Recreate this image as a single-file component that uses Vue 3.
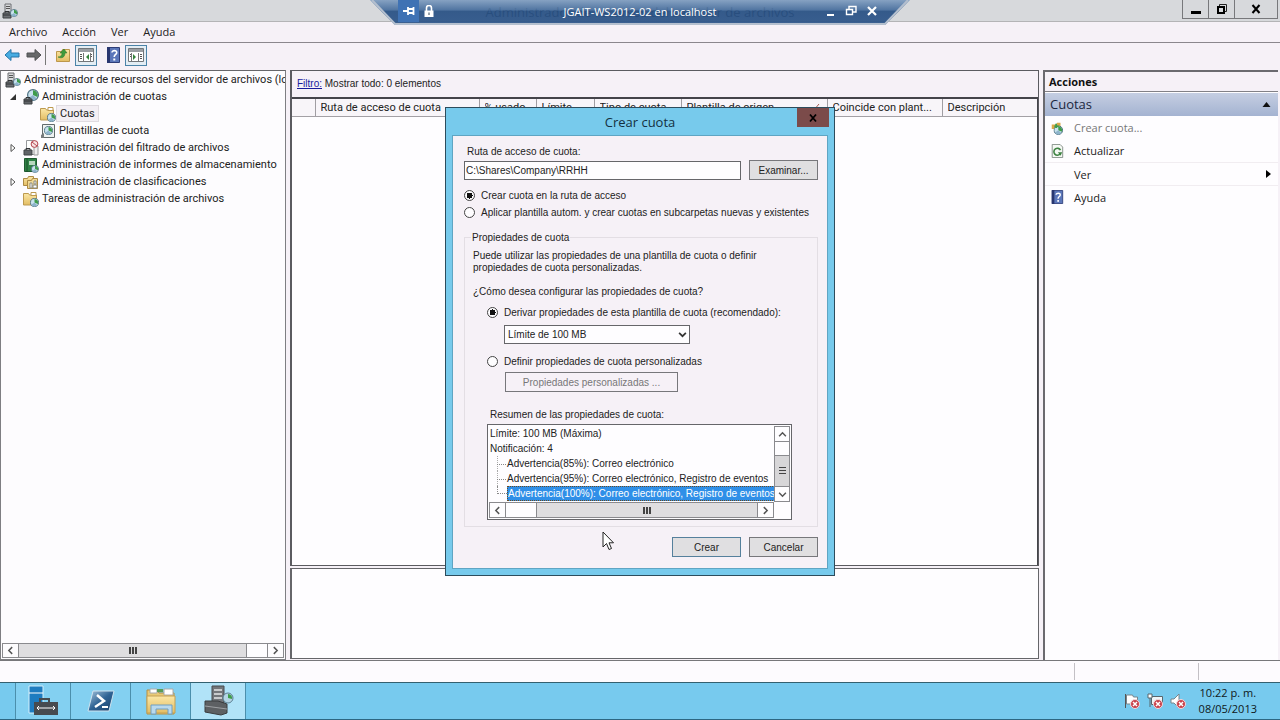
<script setup>
import { ref } from 'vue'

const path = ref('C:\\Shares\\Company\\RRHH')
const scope = ref('path')
const mode = ref('template')
const template = ref('Límite de 100 MB')

const menus = ['Archivo', 'Acción', 'Ver', 'Ayuda']
const tree = [
  { text: 'Administrador de recursos del servidor de archivos (local)', level: 0, icon: 'server' },
  { text: 'Administración de cuotas', level: 1, icon: 'quota', arrow: 'open' },
  { text: 'Cuotas', level: 2, icon: 'folder', selected: true },
  { text: 'Plantillas de cuota', level: 2, icon: 'template' },
  { text: 'Administración del filtrado de archivos', level: 1, icon: 'screen', arrow: 'closed' },
  { text: 'Administración de informes de almacenamiento', level: 1, icon: 'report' },
  { text: 'Administración de clasificaciones', level: 1, icon: 'classify', arrow: 'closed' },
  { text: 'Tareas de administración de archivos', level: 1, icon: 'folder' },
]
const columns = [
  { text: '', cls: 'c-icon' },
  { text: 'Ruta de acceso de cuota', cls: 'c-path' },
  { text: '% usado', cls: 'c-used' },
  { text: 'Límite', cls: 'c-limit' },
  { text: 'Tipo de cuota', cls: 'c-type' },
  { text: 'Plantilla de origen', cls: 'c-source', sorted: true },
  { text: 'Coincide con plant...', cls: 'c-match' },
  { text: 'Descripción', cls: 'c-desc' },
]
const summary = [
  { text: 'Límite: 100 MB (Máxima)' },
  { text: 'Notificación: 4' },
  { text: 'Advertencia(85%): Correo electrónico', child: true },
  { text: 'Advertencia(95%): Correo electrónico, Registro de eventos', child: true },
  { text: 'Advertencia(100%): Correo electrónico, Registro de eventos', child: true, selected: true },
]
</script>

<template>
  <div class="desktop">
    <svg class="defs" aria-hidden="true">
      <defs>
        <linearGradient id="gFolder" x1="0" y1="0" x2="0" y2="1">
          <stop offset="0" stop-color="#fbe7a6" /><stop offset="1" stop-color="#e3bd63" />
        </linearGradient>
        <linearGradient id="gBlue" x1="0" y1="0" x2="1" y2="1">
          <stop offset="0" stop-color="#a9c6dd" /><stop offset="0.5" stop-color="#2f6394" /><stop offset="1" stop-color="#1c3f68" />
        </linearGradient>
        <linearGradient id="gBar" x1="0" y1="0" x2="0" y2="1">
          <stop offset="0" stop-color="#7f9dc0" /><stop offset="0.4" stop-color="#456c9c" /><stop offset="0.45" stop-color="#264f83" /><stop offset="1" stop-color="#2c5489" />
        </linearGradient>
        <symbol id="pie" viewBox="0 0 10 10">
          <circle cx="5" cy="5" r="4.5" fill="#c9e2ee" stroke="#4c6f80" />
          <path d="M5 5V1a4 4 0 0 1 3.6 5.6z" fill="#3f9c4b" />
          <path d="M5 5L1.5 7.5A4 4 0 0 0 8 8z" fill="#8db3cb" />
        </symbol>
        <symbol id="i-server" viewBox="0 0 16 16">
          <path d="M3 1h6v8H3z" fill="#d6d8da" stroke="#6c6f72" />
          <path d="M4 3.5h4M4 5.5h4" stroke="#555" />
          <path d="M1 10h8v5H1z" fill="#6d7074" stroke="#3f4245" /><path d="M3 10V8.500h4V10M1 12h8" fill="none" stroke="#303335" />
          <use href="#pie" x="8" y="6" width="8" height="8" />
        </symbol>
        <symbol id="i-quota" viewBox="0 0 16 16">
          <use href="#pie" x="4" y="0" width="12" height="12" />
          <path d="M1 10h8v5H1z" fill="#606468" stroke="#3f4245" /><path d="M3 10V8.500h4V10M1 12h8" fill="none" stroke="#303335" />
        </symbol>
        <symbol id="i-folder" viewBox="0 0 16 16">
          <path d="M.5 2.500h5l1 1.500h7v10H.5z" fill="url(#gFolder)" stroke="#bd9a50" />
          <path d="M8 1.500h5v3H8z" fill="#fff" stroke="#bd9a50" />
          <use href="#pie" x="7" y="7" width="9" height="9" />
        </symbol>
        <symbol id="i-template" viewBox="0 0 16 16">
          <path d="M2.500 1.500h12v13h-12z" fill="#eef2f1" stroke="#626b6c" />
          <use href="#pie" x="4" y="3" width="9" height="9" /><path d="M1 12l3-2v5H1z" fill="#767b7d" />
        </symbol>
        <symbol id="i-screen" viewBox="0 0 16 16">
          <path d="M3.500.5h8v14h-8z" fill="#fff" stroke="#97999c" /><path d="M11 6h4v9h-4z" fill="#f0f0f0" stroke="#999" />
          <path d="M1 10h8v5H1z" fill="#606468" stroke="#3f4245" /><path d="M3 10V8.500h4V10" fill="none" stroke="#303335" />
          <circle cx="11.500" cy="4" r="3.400" fill="#f7e4e4" stroke="#b54750" /><path d="M9 2l5 4" stroke="#b54750" />
        </symbol>
        <symbol id="i-report" viewBox="0 0 16 16">
          <path d="M1.500 1.500h12v13h-12z" fill="#2f8145" stroke="#1f5a30" /><path d="M4 1v14" stroke="#1b4f2b" />
          <path d="M6 4h6v4H6z" fill="#b8d8bf" /><use href="#pie" x="8" y="8" width="8" height="8" />
        </symbol>
        <symbol id="i-classify" viewBox="0 0 16 16">
          <path d="M.5 4.500h4l1-2h5v9h-10z" fill="url(#gFolder)" stroke="#ad8b45" />
          <path d="M4.500 6.500h4l1-2h5v10h-10z" fill="#f0d894" stroke="#ad8b45" />
          <path d="M7 9h2v5H7zM10 11h4v3h-4zM11 7h2v3h-2z" fill="#fff" stroke="#8b8b82" />
        </symbol>
        <symbol id="i-help" viewBox="0 0 16 16">
          <path d="M2.500.5h12v15h-12z" fill="#5b76b9" stroke="#2e3d78" /><path d="M2 0h3v16H2z" fill="#28366f" />
          <path d="M7 5.500C7 3 12 3 11.700 5.700c0 1.800-2.500 1.800-2.500 4.300" fill="none" stroke="#fff" stroke-width="1.600" /><path d="M8.300 11.500h2v2h-2z" fill="#fff" />
        </symbol>
        <symbol id="badge" viewBox="0 0 10 10">
          <circle cx="5" cy="5" r="4.500" fill="#c8404a" stroke="#f2dadd" /><path d="M3 3l4 4M7 3L3 7" stroke="#fff" stroke-width="1.500" />
        </symbol>
      </defs>
    </svg>

    <header class="titlebar">
      <svg class="app-icon" viewBox="0 0 16 16"><use href="#i-server" /></svg>
      <h1>Administrador de recursos del servidor de archivos</h1>
      <div class="win-buttons">
        <button aria-label="Minimizar"><svg viewBox="0 0 12 12"><path d="M1 9.500h10" stroke="#000" stroke-width="3" /></svg></button>
        <button aria-label="Restaurar"><svg viewBox="0 0 12 12"><path d="M3.500 3V1.500h7v7H9" fill="none" stroke="#222" /><path d="M2 4h6v6H2z" fill="none" stroke="#000" stroke-width="2" /></svg></button>
        <button class="w-close" aria-label="Cerrar"><svg viewBox="0 0 12 12"><path d="M2.500 2l7 8M9.500 2l-7 8" stroke="#000" stroke-width="2" /></svg></button>
      </div>
    </header>

    <nav class="menubar">
      <button v-for="m in menus" :key="m">{{ m }}</button>
    </nav>

    <div class="toolbar">
      <button aria-label="Atrás"><svg viewBox="0 0 16 16"><path d="M1 8l6-5.500V6h8v4H7v3.500z" fill="#48ace2" stroke="#2575a8" /></svg></button>
      <button aria-label="Adelante"><svg viewBox="0 0 16 16"><path d="M15 8L9 2.500V6H1v4h8v3.500z" fill="#67686a" stroke="#4f5052" /></svg></button>
      <span class="sep"></span>
      <button aria-label="Subir"><svg viewBox="0 0 16 16"><path d="M1.500 4.500h5l1-2h7v12h-13z" fill="url(#gFolder)" stroke="#bd974b" /><path d="M3 10c3 0 4-2 4-4H5l4-4 3 4h-2c0 4-3 6-7 4z" fill="#3f9b3b" stroke="#24702b" stroke-width=".5" /></svg></button>
      <button class="boxed" aria-label="Mostrar árbol"><svg viewBox="0 0 16 16"><path d="M.5 1.500h15v13H.5z" fill="#fff" stroke="#72767a" /><path d="M1 2h14v3H1z" fill="#9a9ea3" /><path d="M5.500 6v8M12.500 6v8" stroke="#777" /><path d="M2 7.500h2M2 9.500h2M2 11.500h2M13 7.500h1M13 9.500h1" stroke="#555" /><path d="M11 7v6l-3-3z" fill="#35833c" /></svg></button>
      <button class="t-help" aria-label="Ayuda"><svg viewBox="0 0 16 16"><use href="#i-help" /></svg></button>
      <button class="boxed" aria-label="Mostrar acciones"><svg viewBox="0 0 16 16"><path d="M.5 1.500h15v13H.5z" fill="#fff" stroke="#72767a" /><path d="M1 2h14v3H1z" fill="#9a9ea3" /><path d="M10.500 6v8M3.500 6v8" stroke="#777" /><path d="M12 7.500h2M12 9.500h2M12 11.500h2M2 7.500h1M2 9.500h1" stroke="#555" /><path d="M5 7v6l3-3z" fill="#35833c" /></svg></button>
    </div>

    <main class="workspace">
      <aside class="tree-pane">
        <ul class="tree">
          <li v-for="n in tree" :key="n.text" :class="['level' + n.level, { selected: n.selected }]">
            <svg v-if="n.level === 1" class="arrow" viewBox="0 0 8 8">
              <path v-if="n.arrow === 'open'" d="M7 1v6H1z" fill="#333" />
              <path v-if="n.arrow === 'closed'" d="M2 .5v7L6 4z" fill="#fff" stroke="#555" />
            </svg>
            <svg class="node-icon" viewBox="0 0 16 16"><use :href="'#i-' + n.icon" /></svg>
            <span>{{ n.text }}</span>
          </li>
        </ul>
        <div class="hscroll">
          <button aria-label="Izquierda"><svg viewBox="0 0 8 8"><path d="M5.500 1L2.500 4l3 3" fill="none" stroke="#555" stroke-width="1.300" /></svg></button>
          <div class="track"><div class="thumb tree-thumb"><i></i></div></div>
          <button aria-label="Derecha"><svg viewBox="0 0 8 8"><path d="M2.500 1l3 3-3 3" fill="none" stroke="#555" stroke-width="1.300" /></svg></button>
        </div>
      </aside>

      <section class="center">
        <div class="list-pane">
          <p class="filter"><a href="#">Filtro:</a> Mostrar todo: 0 elementos</p>
          <div class="grid">
            <table>
              <thead>
                <tr>
                  <th v-for="c in columns" :key="c.cls" :class="c.cls">
                    <div>{{ c.text }}<svg v-if="c.sorted" class="sort" viewBox="0 0 8 8"><path d="M1 7l5-6" stroke="#a65a50" /></svg></div>
                  </th>
                </tr>
              </thead>
            </table>
          </div>
        </div>
        <div class="detail-pane"></div>
      </section>

      <aside class="actions">
        <h2>Acciones</h2>
        <h3>Cuotas <svg viewBox="0 0 8 5"><path d="M0 5l4-5 4 5z" fill="#111" /></svg></h3>
        <ul>
          <li><button disabled><svg viewBox="0 0 16 16"><path d="M2 4h5l1-2h4v7H2z" fill="#d9a94a" /><use href="#pie" x="4" y="5" width="11" height="11" /><path d="M7 3v5M5 6h5" stroke="#3f9c4b" stroke-width="2" /></svg>Crear cuota...</button></li>
          <li><button><svg viewBox="0 0 16 16"><path d="M2.500.5h9l3 3v12h-12z" fill="#f5f8f4" stroke="#7d8880" /><path d="M11.500 11.500A4 4 0 1 1 12 7" fill="none" stroke="#3c8241" stroke-width="1.800" /><path d="M9 9.500h5l-2 4z" fill="#3c8241" /></svg>Actualizar</button></li>
          <li class="ruled"><button><span class="no-icon"></span>Ver<svg class="sub" viewBox="0 0 5 8"><path d="M0 0l5 4-5 4z" fill="#000" /></svg></button></li>
          <li class="ruled"><button><svg viewBox="0 0 16 16"><use href="#i-help" /></svg>Ayuda</button></li>
        </ul>
      </aside>
    </main>

    <div class="statusbar"><span></span><span></span></div>

    <footer class="taskbar">
      <div class="apps">
        <button aria-label="Administrador del servidor"><svg viewBox="0 0 32 32"><path d="M2 1h14v27H2z" fill="#1e7cc0" stroke="#d4effb" /><path d="M2 8h14" stroke="#fff" /><path d="M13 17v-3h9v3" fill="none" stroke="#474b50" stroke-width="2" /><path d="M7 17h24v13H7z" fill="#474b50" /><path d="M10 23h18M12 21l-2 2 2 2M26 21l2 2-2 2" fill="none" stroke="#fff" /></svg></button>
        <button aria-label="PowerShell"><svg viewBox="0 0 32 32"><path d="M8 6h21l-5 20H3z" fill="url(#gBlue)" stroke="#cfe3ef" /><path d="M12 10l7 6-9 6" fill="none" stroke="#fff" stroke-width="2.500" /><path d="M17 22h6" stroke="#fff" stroke-width="2" /></svg></button>
        <button aria-label="Explorador"><svg viewBox="0 0 32 32"><path d="M2 5h10l2 3h15v21H2z" fill="#e8c977" stroke="#b48f43" /><path d="M5 4h7v4H5zM19 4h9v6h-9z" fill="#fff" stroke="#aaa" /><path d="M12 4h6v3h-6z" fill="#5b9c57" /><path d="M2 11h28v17H2z" fill="url(#gFolder)" stroke="#c4a055" /><path d="M6 29v-9h21v9h-4v-5H11v5z" fill="#b9d9ed" stroke="#6f9fc3" /></svg></button>
        <button class="active" aria-label="Recursos de archivos"><svg viewBox="0 0 32 32"><path d="M10 1h12v17H10z" fill="#73767a" stroke="#484b4e" /><path d="M12 5h8M12 9h8M12 13h8" stroke="#c8cacc" stroke-width="2" /><path d="M3 16h13l9 3v9l-6 2L3 27z" fill="#5d6063" stroke="#3a3c3e" /><path d="M3 21l22 3" stroke="#9da0a3" /><circle cx="26" cy="13" r="5" fill="#b4d5e5" stroke="#5a7e91" /><path d="M26 13V9a4 4 0 0 1 4 5z" fill="#3f9c4b" /></svg></button>
      </div>
      <div class="tray">
        <svg viewBox="0 0 16 16"><path d="M1.500 1v14" stroke="#555" /><path d="M2.500 2h6l1 2h4v7h-11z" fill="#fff" stroke="#77858c" /><use href="#badge" x="6" y="6" width="10" height="10" /></svg>
        <svg viewBox="0 0 16 16"><path d="M4.500 3.500h11v8h-11z" fill="#eef5f8" stroke="#59666d" /><path d="M1 1h4v4H1zM3 5v9" fill="#fff" stroke="#59666d" /><use href="#badge" x="6" y="6" width="10" height="10" /></svg>
        <svg viewBox="0 0 16 16"><path d="M1 6h3l5-5v14l-5-5H1z" fill="#fff" stroke="#77858c" /><use href="#badge" x="6" y="6" width="10" height="10" /></svg>
      </div>
      <time class="clock"><span>10:22 p. m.</span><span>08/05/2013</span></time>
    </footer>

    <div class="rdp">
      <svg class="rdp-shape" viewBox="0 0 540 25" preserveAspectRatio="none"><path d="M0 0h540l-25 25H25z" fill="url(#gBar)" fill-opacity=".92" /><path d="M2 0l23 24h490l23-24" fill="none" stroke="#b4bfce" stroke-width="2" /></svg>
      <div class="rdp-left">
        <button class="pin" aria-label="Anclar"><svg viewBox="0 0 12 12"><path d="M0 6h5M5 2v8M5 4h5M5 8h5M10.500 2v8" stroke="#fff" stroke-width="1.800" /></svg></button>
        <svg class="lock" viewBox="0 0 12 12"><path d="M3.500 6V3a2.500 2.500 0 0 1 5 0v3" fill="none" stroke="#fff" stroke-width="1.600" /><path d="M1.500 5.500h9V12h-9z" fill="#fff" /><path d="M6 7.500v2.500" stroke="#345" /></svg>
      </div>
      <span class="rdp-title">JGAIT-WS2012-02 en localhost</span>
      <div class="rdp-right">
        <button aria-label="Minimizar sesión"><svg viewBox="0 0 12 12"><path d="M3 10h7" stroke="#fff" stroke-width="2" /></svg></button>
        <button aria-label="Restaurar sesión"><svg viewBox="0 0 12 12"><path d="M4 4V1.500h7V7H8M1.500 4.500h6v5h-6z" fill="none" stroke="#fff" stroke-width="1.400" /></svg></button>
        <button aria-label="Cerrar sesión"><svg viewBox="0 0 12 12"><path d="M2 2l8 8M10 2l-8 8" stroke="#fff" stroke-width="2.200" /></svg></button>
      </div>
    </div>

    <form class="dialog" role="dialog" aria-labelledby="dlg-title" @submit.prevent>
      <div class="dlg-head">
        <h2 id="dlg-title">Crear cuota</h2>
        <button type="button" class="dlg-close" aria-label="Cerrar diálogo"><svg viewBox="0 0 10 10"><path d="M2 1.500l6 7M8 1.500l-6 7" stroke="#000" stroke-width="1.800" /></svg></button>
      </div>
      <div class="dlg-body">
        <label class="path-label" for="path">Ruta de acceso de cuota:</label>
        <div class="path-row">
          <input id="path" v-model="path" type="text" />
          <button type="button" class="btn">Examinar...</button>
        </div>
        <label class="radio"><input v-model="scope" type="radio" name="scope" value="path" />Crear cuota en la ruta de acceso</label>
        <label class="radio"><input v-model="scope" type="radio" name="scope" value="auto" />Aplicar plantilla autom. y crear cuotas en subcarpetas nuevas y existentes</label>

        <fieldset>
          <legend>Propiedades de cuota</legend>
          <p class="intro">Puede utilizar las propiedades de una plantilla de cuota o definir<br />propiedades de cuota personalizadas.</p>
          <p class="question">¿Cómo desea configurar las propiedades de cuota?</p>
          <div class="indent">
            <label class="radio"><input v-model="mode" type="radio" name="mode" value="template" />Derivar propiedades de esta plantilla de cuota (recomendado):</label>
            <div class="select-wrap">
              <select v-model="template" aria-label="Plantilla de cuota"><option>Límite de 100 MB</option></select>
              <svg viewBox="0 0 8 8"><path d="M1 2.500L4 5.500 7 2.500" fill="none" stroke="#333" stroke-width="1.500" /></svg>
            </div>
            <label class="radio"><input v-model="mode" type="radio" name="mode" value="custom" />Definir propiedades de cuota personalizadas</label>
            <button type="button" class="btn custom" disabled>Propiedades personalizadas ...</button>
            <p class="summary-label">Resumen de las propiedades de cuota:</p>
            <div class="summary">
              <div class="summary-top">
                <ul>
                  <li v-for="s in summary" :key="s.text" :class="{ child: s.child, selected: s.selected }"><span>{{ s.text }}</span></li>
                </ul>
                <div class="vscroll">
                  <button type="button" aria-label="Arriba"><svg viewBox="0 0 8 8"><path d="M1 5.500l3-3 3 3" fill="none" stroke="#555" stroke-width="1.300" /></svg></button>
                  <div class="vtrack"><div class="vthumb"><i></i></div></div>
                  <button type="button" aria-label="Abajo"><svg viewBox="0 0 8 8"><path d="M1 2.500l3 3 3-3" fill="none" stroke="#555" stroke-width="1.300" /></svg></button>
                </div>
              </div>
              <div class="hscroll">
                <button type="button" aria-label="Desplazar a la izquierda"><svg viewBox="0 0 8 8"><path d="M5.500 1L2.500 4l3 3" fill="none" stroke="#555" stroke-width="1.300" /></svg></button>
                <div class="track right"><div class="thumb sum-thumb"><i></i></div></div>
                <button type="button" aria-label="Desplazar a la derecha"><svg viewBox="0 0 8 8"><path d="M2.500 1l3 3-3 3" fill="none" stroke="#555" stroke-width="1.300" /></svg></button>
              </div>
            </div>
          </div>
        </fieldset>

        <div class="dlg-actions">
          <button type="submit" class="btn primary">Crear</button>
          <button type="button" class="btn">Cancelar</button>
        </div>
      </div>
    </form>

    <svg class="cursor" viewBox="0 0 12 20"><path d="M1 1v15l3.500-3.500L7 18.500l2.500-1L7 11.800h4.500z" fill="#fff" stroke="#222" /></svg>
  </div>
</template>

<style>
body { margin: 0; }
</style>

<style scoped>
* { box-sizing: border-box; }
h1, h2, h3, p, ul { margin: 0; padding: 0; font-weight: 400; }
ul { list-style: none; }
button { font: inherit; color: inherit; padding: 0; margin: 0; border: 0; background: none; border-radius: 0; }
svg { display: block; flex: none; }
.defs { position: absolute; width: 0; height: 0; }

.desktop {
  position: relative; display: flex; flex-direction: column; min-height: 100vh; overflow: hidden;
  background: #f6f1f7; color: #222; font: 11px/17px "Open Sans", "Noto Sans", sans-serif;
}

.titlebar { display: grid; grid-template-columns: 1fr auto 1fr; height: 22px; background: #d7d9dc; border-bottom: 1px solid #b4b4b6; }
.app-icon { width: 16px; height: 16px; margin: 3px 0 0 2px; }
.titlebar h1 { font-size: 13px; line-height: 24px; color: #333; }
.win-buttons { display: flex; justify-self: end; height: 19px; margin-right: 2px; border: 1px solid #77787b; border-top: 0; }
.win-buttons button { display: grid; place-items: center; width: 26px; border-right: 1px solid #77787b; }
.win-buttons .w-close { width: 42px; border: 0; }
.win-buttons svg { width: 12px; height: 12px; }

.menubar { display: flex; gap: 15px; height: 21px; padding-left: 9px; border-bottom: 1px solid #8b878d; }
.menubar button { line-height: 20px; }

.toolbar { display: flex; align-items: center; height: 27px; padding: 0 0 3px 4px; }
.toolbar svg { width: 16px; height: 16px; }
.toolbar > button + button { margin-left: 6px; }
.sep { width: 1px; height: 20px; margin: 0 9px 0 3px; background: #777; }
.toolbar .boxed { display: grid; place-items: center; width: 22px; height: 21px; margin-left: 4px; border: 1px solid #4b83a8; background: #e3edf4; }
.toolbar .t-help { margin-left: 8px; }

.workspace { display: flex; flex: 1; gap: 4px; border-bottom: 1px solid #77777a; }
.tree-pane { display: flex; flex-direction: column; width: 286px; border: 1px solid #7e7e82; border-top-color: #66666a; background: #fdfcfe; overflow: hidden; }
.tree { flex: 1; font-family: Roboto, "Open Sans", sans-serif; }
.tree li { display: flex; align-items: center; height: 17px; white-space: nowrap; }
.tree .node-icon { width: 16px; height: 16px; margin-right: 3px; }
.tree .level0 { padding-left: 4px; }
.tree .level1 { padding-left: 8px; }
.tree .level2 { padding-left: 39px; }
.tree .arrow { width: 8px; height: 8px; margin-right: 6px; }
.tree .selected span { margin-left: -3px; padding: 0 3px; background: #f3eff4; border: 1px solid #dfdbe0; line-height: 15px; }

.hscroll { display: flex; height: 15px; margin: 1px; border: 1px solid #8a8a8e; }
.hscroll button, .vscroll button { display: grid; place-items: center; }
.hscroll button { width: 15px; }
.hscroll svg, .vscroll svg { width: 9px; height: 9px; }
.track { display: flex; flex: 1; border: 1px solid #8a8a8e; border-width: 0 1px; background: #fefdff; }
.thumb { display: grid; place-items: center; background: #dfdee0; border-right: 1px solid #8a8a8e; }
.thumb i { width: 8px; height: 7px; background: repeating-linear-gradient(90deg, #444 0 2px, transparent 2px 3px); }
.tree-thumb { width: 92%; }

.center { display: flex; flex: 1; flex-direction: column; gap: 2px; min-width: 0; padding-bottom: 1px; }
.list-pane { display: flex; flex: 1; flex-direction: column; border: 1px solid #5b5b60; border-left-width: 2px; }
.filter { height: 26px; padding-left: 5px; font: 10px/26px "Liberation Sans", Arial, sans-serif; color: #222; }
.filter a { color: #1a1a9c; }
.grid { flex: 1; border-top: 2px solid #44444a; border-right: 1px solid #44444a; background: #fefdff; }
table { width: 100%; border-collapse: collapse; table-layout: fixed; }
th { height: 17px; padding: 0 0 0 5px; border-right: 1px solid #a09da2; border-bottom: 1px solid #a3a0a5; background: #f8f5f9; font-family: Roboto, "Open Sans", sans-serif; font-weight: 400; line-height: 17px; text-align: left; }
th:last-child { border-right: 0; }
th div { overflow: hidden; white-space: nowrap; text-overflow: ellipsis; }
.sort { float: right; width: 8px; height: 8px; margin: 4px 6px 0 0; }
.c-icon { width: 23px; }
.c-path { width: 164px; }
.c-used { width: 57px; }
.c-limit { width: 58px; }
.c-type { width: 87px; }
.c-source { width: 146px; }
.c-match { width: 115px; }
.detail-pane { height: 91px; border: 1px solid #66666a; border-left-width: 2px; background: #fefdff; }

.actions { width: 235px; margin-right: 2px; border-left: 2px solid #6b6a6f; border-top: 2px solid #6b6a6f; background: #fefdff; }
.actions h2 { height: 20px; padding-left: 4px; border-bottom: 1px solid #828186; background: #f6f1f7; font-size: 11px; font-weight: 700; line-height: 20px; color: #111; }
.actions h3 { display: flex; align-items: center; justify-content: space-between; height: 23px; margin-top: 1px; padding: 0 7px 0 5px; background: linear-gradient(#c5cee2, #a4b3d1); font-size: 13px; color: #1b2740; }
.actions h3 svg { width: 9px; height: 5px; }
.actions li { height: 23px; }
.actions li.ruled { border-top: 1px solid #f1edf1; }
.actions li button { display: flex; align-items: center; width: 100%; height: 100%; padding: 0 7px 0 5px; }
.actions li button:disabled { color: #777; }
.actions li svg:first-child, .no-icon { width: 14px; height: 14px; margin-right: 10px; }
.actions li .sub { width: 5px; height: 8px; margin-left: auto; }

.statusbar { display: flex; justify-content: flex-end; height: 21px; background: #fdfbfe; }
.statusbar span { width: 124px; margin: 2px 0; border-left: 1px solid #c3c0c5; }
.statusbar span:last-child { width: 82px; }

.taskbar { display: flex; align-items: center; height: 38px; border-top: 1px solid #33606f; border-bottom: 1px solid #2d6782; background: #77caee; color: #101820; }
.apps { display: flex; flex: 1; align-self: stretch; margin-left: 15px; border-left: 1px solid #4b8fac; }
.apps button { display: grid; place-items: center; width: 60px; border-right: 1px solid #4b8fac; background: #83d0f1; }
.apps button:first-child { width: 55px; }
.apps button.active { width: 55px; background: #b1e3f8; }
.apps svg { width: 32px; height: 32px; }
.tray { display: flex; gap: 7px; margin-right: 13px; }
.tray svg { width: 16px; height: 16px; }
.clock { display: grid; margin-right: 23px; line-height: 16px; text-align: center; }

.rdp { position: absolute; top: 0; left: 50%; display: grid; grid-template-columns: 1fr auto 1fr; width: 540px; height: 25px; margin-left: -270px; padding: 0 28px; color: #fff; }
.rdp-shape { position: absolute; inset: 0; width: 100%; height: 100%; }
.rdp-left, .rdp-title, .rdp-right { position: relative; }
.rdp-left, .rdp-right { display: flex; align-items: flex-start; }
.rdp-right { justify-content: flex-end; }
.rdp button { width: 21px; height: 22px; display: grid; place-items: center; }
.rdp .pin { background: #3f72b4; }
.rdp button svg, .rdp .lock { width: 12px; height: 12px; }
.rdp .lock { margin: 5px 0 0 4px; }
.rdp-title { font-size: 11px; line-height: 24px; }

.dialog {
  position: absolute; top: 107px; left: 50%; width: 390px; margin-left: -195px; padding: 0 6px 6px;
  border: 1px solid #2d4c5c; background: #77caec; color: #222; font: 10px/13px "Liberation Sans", Arial, sans-serif;
}
.dlg-head { position: relative; height: 27px; }
.dlg-head h2 { font: 13px/28px "Open Sans", "Noto Sans", sans-serif; text-align: center; color: #14303f; }
.dlg-close { position: absolute; top: 0; right: -1px; display: grid; place-items: center; width: 32px; height: 19px; background: #7b4b4a; }
.dlg-close svg { width: 10px; height: 10px; }
.dlg-body { padding: 9px 9px 11px 11px; border: 1px solid #5fa5c3; background: #f6f1f7; }
.path-label { display: block; padding-left: 3px; line-height: 13px; }
.path-row { display: flex; gap: 8px; align-items: center; margin: 2px 0 7px; }
.path-row input { flex: 1; min-width: 0; height: 19px; padding: 0 1px; border: 1px solid #66666a; background: #fefdff; color: inherit; font: inherit; }
.btn { display: block; width: 69px; height: 20px; border: 1px solid #77777b; background: #e0dfe1; }
.radio { display: flex; align-items: center; height: 17px; white-space: nowrap; }
.radio input { appearance: none; flex: none; width: 11px; height: 11px; margin: 0 6px 0 0; border: 1px solid #444; border-radius: 50%; background: #fefdff; }
.radio input:checked { background: radial-gradient(circle, #111 0 3px, #fefdff 3px); }
fieldset { min-width: 0; margin: 10px 0 0; padding: 6px 8px; border: 1px solid #e3dee4; }
legend { padding: 0 1px; line-height: 13px; margin-left: -2px; }
.intro { line-height: 12px; white-space: nowrap; }
.question { margin: 11px 0 6px; }
.indent { padding-left: 14px; }
.select-wrap { position: relative; width: 186px; margin: 4px 0 9px 17px; }
.select-wrap select { appearance: none; display: block; width: 100%; height: 19px; padding: 0 3px; border: 1px solid #66666a; border-radius: 0; background: #fefdff; color: inherit; font: inherit; }
.select-wrap svg { position: absolute; top: 5px; right: 3px; width: 9px; height: 9px; }
.custom { width: 173px; margin: 2px 0 0 18px; background: #f6f1f7; }
.custom:disabled { color: #777; }
.summary-label { margin: 16px 0 3px; padding-left: 3px; }
.summary { width: 305px; border: 1px solid #66666a; background: #fefdff; }
.summary-top { display: flex; height: 77px; padding: 1px 1px 0 0; }
.summary ul { flex: 1; min-width: 0; }
.summary li { height: 15px; padding-left: 2px; line-height: 15px; white-space: nowrap; overflow: hidden; }
.summary li.child { display: flex; padding-left: 9px; }
.summary li.child::before { content: ""; flex: none; width: 9px; height: 7px; border-left: 1px dotted #888; border-bottom: 1px dotted #888; }
.summary li.child:not(.selected)::before { border-left: 0; height: 8px; }
.summary li.child:not(.selected) { background: repeating-linear-gradient(#aaa 0 1px, transparent 1px 2px) 9px 0 / 1px 100% no-repeat; }
.summary li.child span { flex: 1; padding-left: 1px; }
.summary li.selected span { background: #2f8fe8; outline: 1px dotted #6b4a20; outline-offset: -1px; color: #fff; }
.vscroll { display: flex; flex-direction: column; width: 16px; border: 1px solid #8a8a8e; }
.vscroll button { height: 14px; }
.vtrack { display: flex; flex: 1; flex-direction: column; justify-content: flex-end; border: 1px solid #8a8a8e; border-width: 1px 0; }
.vthumb { display: grid; place-items: center; height: 31px; border-top: 1px solid #8a8a8e; background: #d7d6d8; }
.vthumb i { width: 7px; height: 8px; background: repeating-linear-gradient(#444 0 1px, transparent 1px 3px); }
.summary .hscroll { margin: 0 17px 1px 1px; height: 16px; }
.track.right { justify-content: flex-end; }
.sum-thumb { width: 88%; border-right: 0; border-left: 1px solid #8a8a8e; }
.dlg-actions { display: flex; justify-content: flex-end; gap: 8px; margin-top: 10px; }
.primary { border-color: #55809c; }

.cursor { position: absolute; top: 531px; left: 602px; width: 12px; height: 20px; }
</style>
